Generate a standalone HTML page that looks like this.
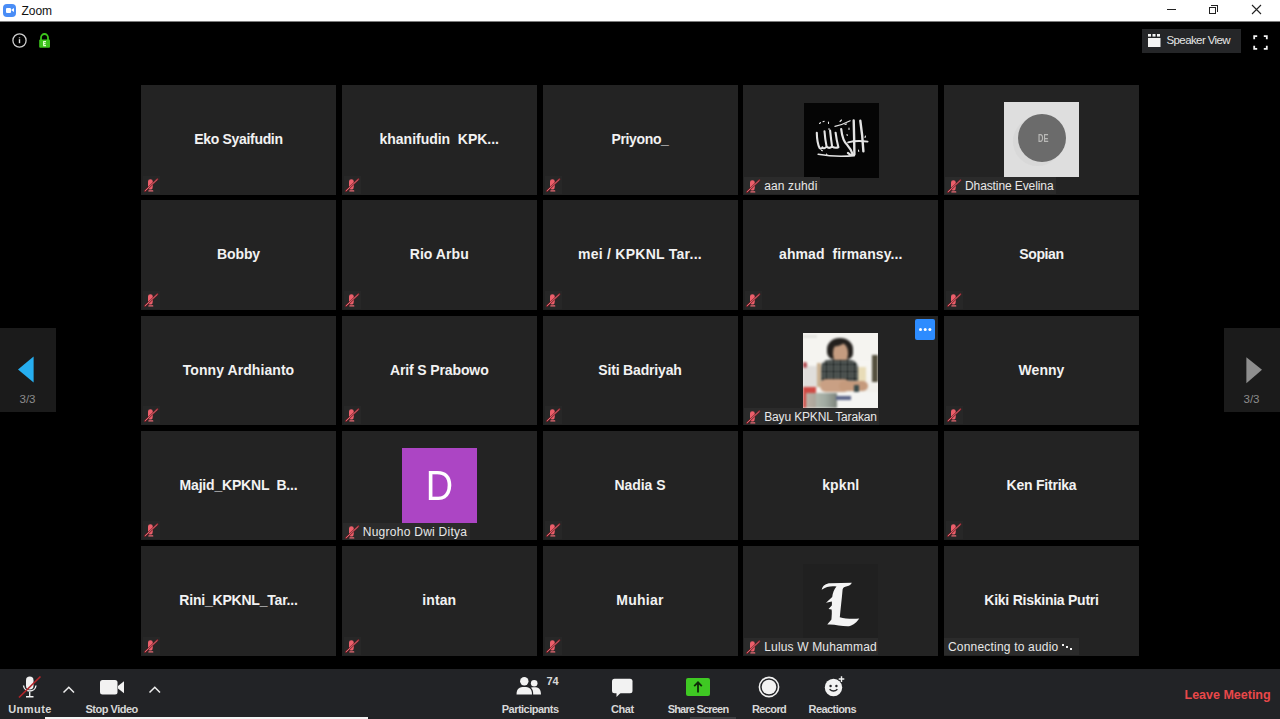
<!DOCTYPE html>
<html><head><meta charset="utf-8">
<style>
*{margin:0;padding:0;box-sizing:border-box}
html,body{width:1280px;height:719px;overflow:hidden;background:#000;font-family:"Liberation Sans",sans-serif}
.abs{position:absolute}
#title{position:absolute;left:0;top:0;width:1280px;height:21px;background:#fff}
.tile{position:absolute;width:195px;height:109.5px;background:#232323}
.nm{position:absolute;left:0;right:0;top:45px;text-align:center;color:#f2f2f2;font-weight:bold;font-size:14px;line-height:18px;white-space:pre}
.mic{position:absolute;left:2px;top:90.5px;width:17px;height:18px;background:#272727}
.lbl{position:absolute;left:1px;top:92px;height:17px;background:#2b2b2b;color:#e8e8e8;font-size:12px;line-height:18px;padding-left:20px;padding-right:3px;white-space:pre}
.lbl svg{position:absolute;left:1px;top:0}
.tb{position:absolute;color:#d8d8d8;font-weight:bold;font-size:11px;line-height:14px;white-space:pre}
</style></head><body>
<svg width="0" height="0" style="position:absolute">
<defs>
<g id="mm">
<path d="M5 5.6 A2.4 2.4 0 0 1 9.8 5.6 V10.6 Q9.8 13.2 8.1 13.6 H6.7 Q5 13.2 5 10.6Z" fill="#ec5f6b"/>
<rect x="5.3" y="14.3" width="5" height="1.3" rx="0.4" fill="#e96a74"/>
<path d="M2 14.9 L14.4 3.3" stroke="#7c1a22" stroke-width="2" stroke-linecap="round"/>
<path d="M2.2 14.7 L14.2 3.5" stroke="#e27c86" stroke-width="0.9" stroke-linecap="round"/>
</g>
</defs>
</svg>

<div class="abs" style="left:0;top:21px;width:1280px;height:1px;background:#7d7d7d"></div>
<div id="title">
 <div class="abs" style="left:3px;top:4px;width:13px;height:13px;border-radius:4px;background:#4a8df6"></div>
 <div class="abs" style="left:5.5px;top:8px;width:5.5px;height:4.5px;background:#fff;border-radius:1px"></div>
 <div class="abs" style="left:11px;top:8px;width:0;height:0;border-top:2.25px solid transparent;border-bottom:2.25px solid transparent;border-right:3px solid #fff"></div>
 <div class="abs" style="left:21.4px;top:4.2px;font-size:12px;line-height:14px;color:#111">Zoom</div>
 <div class="abs" style="left:1167px;top:9px;width:9px;height:1px;background:#222"></div>
 <div class="abs" style="left:1209px;top:7px;width:7px;height:7px;border:1px solid #222;background:#fff"></div>
 <div class="abs" style="left:1211px;top:5px;width:7px;height:7px;border-top:1px solid #222;border-right:1px solid #222"></div>
 <svg class="abs" style="left:1251px;top:4px" width="11" height="11"><path d="M1 1L10 10M10 1L1 10" stroke="#222" stroke-width="1.1"/></svg>
</div>

<!-- top left icons -->
<svg class="abs" style="left:11px;top:32px" width="17" height="17"><circle cx="8.5" cy="8.5" r="6.6" fill="none" stroke="#cfcfcf" stroke-width="1.3"/><rect x="7.8" y="5.3" width="1.4" height="1" fill="#bbb"/><rect x="7.8" y="7.2" width="1.4" height="4" fill="#ddd"/></svg>
<svg class="abs" style="left:38px;top:33px" width="13" height="15"><path d="M3 7 V4.5 A3.5 3.5 0 0 1 10 4.5 V7" fill="none" stroke="#3cc41c" stroke-width="1.8"/><rect x="1.2" y="6.5" width="10.8" height="8.2" rx="1" fill="#3cc41c"/><path d="M5.2 8.6h2.8M5.2 10.6h2.4M5.2 12.6h2.8M5.6 8.6v4" stroke="#e0ffd0" stroke-width="1.1"/></svg>

<!-- speaker view -->
<div class="abs" style="left:1142px;top:29px;width:99px;height:24px;background:#252628"></div>
<svg class="abs" style="left:1147px;top:33px" width="15" height="15"><rect x="1" y="1" width="3" height="2.6" fill="#f4f4f4"/><rect x="5.5" y="1" width="3" height="2.6" fill="#f4f4f4"/><rect x="10" y="1" width="3" height="2.6" fill="#f4f4f4"/><rect x="1" y="5" width="12.5" height="9" fill="#f4f4f4"/></svg>
<div class="abs" style="left:1166.5px;top:32.5px;font-size:11.5px;line-height:14px;color:#e6e6e6;letter-spacing:-0.6px">Speaker View</div>
<svg class="abs" style="left:1252px;top:34px" width="17" height="17"><path d="M2.2 5.2V2.2H5.2M11.8 2.2H14.8V5.2M14.8 11.8V14.8H11.8M5.2 14.8H2.2V11.8" fill="none" stroke="#f2f2f2" stroke-width="1.8"/></svg>

<!-- side nav -->
<div class="abs" style="left:0;top:328px;width:56px;height:84px;background:#1b1b1b"></div>
<svg class="abs" style="left:16px;top:355px" width="20" height="30"><path d="M2 14.5 L17.6 1.5 V27.5Z" fill="#26aef0"/></svg>
<div class="abs" style="left:19.5px;top:393px;font-size:11.5px;line-height:13px;color:#8d8d8d">3/3</div>
<div class="abs" style="left:1224px;top:328px;width:56px;height:84px;background:#1b1b1b"></div>
<svg class="abs" style="left:1244px;top:355px" width="20" height="30"><path d="M2.4 2.3 L18 14.8 L2.4 28.3Z" fill="#8e8e8e"/></svg>
<div class="abs" style="left:1243.5px;top:393px;font-size:11.5px;line-height:13px;color:#8d8d8d">3/3</div>

<div class="tile" style="left:141px;top:85px"><div class="nm" style="letter-spacing:-0.325px">Eko Syaifudin</div><div class="mic"><svg width="17" height="17"><use href="#mm"/></svg></div></div>
<div class="tile" style="left:341.75px;top:85px"><div class="nm" style="letter-spacing:-0.024px">khanifudin  KPK...</div><div class="mic"><svg width="17" height="17"><use href="#mm"/></svg></div></div>
<div class="tile" style="left:542.5px;top:85px"><div class="nm" style="letter-spacing:-0.357px">Priyono_</div><div class="mic"><svg width="17" height="17"><use href="#mm"/></svg></div></div>
<div class="tile" style="left:743.25px;top:85px"><div class="abs" style="left:60.25px;top:17.5px;width:75px;height:75px;background:#050505"></div>
<svg class="abs" style="left:60.25px;top:17.5px" width="75" height="75"><g fill="none" stroke="#e4e4e4" stroke-linecap="round" stroke-linejoin="round">
<path d="M49.7 17.5 Q50.2 35 50.4 51.2 Q47 53 44 50" stroke-width="2.4"/>
<path d="M56.3 17.8 Q58.5 32 59.4 48.4" stroke-width="2.4"/>
<path d="M44.1 39.4 Q53 37 63.6 38.7" stroke-width="1.8"/>
<path d="M37.2 26.2 Q38.5 38 43.4 42.2 Q47 46 49 51.9" stroke-width="2.2"/>
<path d="M12.8 29.7 Q13 40 15.6 45 Q17.5 46.5 18.4 44.3 Q20 46.5 22.6 43.6 Q21 36 20.5 28.3 M22.6 43.6 Q25 46 28.1 43.6 Q27 36 26.1 27.6 M28.1 43.6 Q31 45.5 34.4 44.3 Q32.5 37 31.6 29.7" stroke-width="2.1"/>
<path d="M14.2 51.2 Q32 54.5 50.4 52.6" stroke-width="1.6"/>
<path d="M30.9 23.4 Q38 22 46.2 17.8" stroke-width="1.1"/>
<path d="M15.5 20.5l1 -0.8M19 18.8l1.2 -0.5M24.5 19l0 1.5M25 25.5l0 1M36 18.5q1 -1 1.5 -1.5M41 21.5l1.5 -0.5M45 25l0 1.5M43 31.5l0.3 1M61.5 33l-0.5 1.5M54.5 47l0.2 1.5M17.5 47.5l1 0.3M22.5 51l0.5 1" stroke-width="1.1"/>
</g></svg><div class="lbl" style="letter-spacing:0.125px;"><svg width="17" height="17"><use href="#mm"/></svg>aan zuhdi</div></div>
<div class="tile" style="left:944px;top:85px"><div class="abs" style="left:60px;top:17.25px;width:75px;height:75px;background:#dedede"></div>
<div class="abs" style="left:69px;top:32px;width:49px;height:49px;border-radius:50%;background:#d3d3d3;opacity:.6"></div>
<div class="abs" style="left:73.5px;top:28.5px;width:48.5px;height:48.5px;border-radius:50%;background:#6b6b6b"></div>
<div class="abs" style="left:74.5px;top:46.7px;width:48.5px;text-align:center;font-size:11px;line-height:12px;font-weight:bold;color:#b8b8b6;transform:scaleX(0.68)">DE</div><div class="lbl" style="letter-spacing:-0.100px;"><svg width="17" height="17"><use href="#mm"/></svg>Dhastine Evelina</div></div>
<div class="tile" style="left:141px;top:200.25px"><div class="nm" style="letter-spacing:-0.100px">Bobby</div><div class="mic"><svg width="17" height="17"><use href="#mm"/></svg></div></div>
<div class="tile" style="left:341.75px;top:200.25px"><div class="nm" style="letter-spacing:0.057px">Rio Arbu</div><div class="mic"><svg width="17" height="17"><use href="#mm"/></svg></div></div>
<div class="tile" style="left:542.5px;top:200.25px"><div class="nm" style="letter-spacing:0.259px">mei / KPKNL Tar...</div><div class="mic"><svg width="17" height="17"><use href="#mm"/></svg></div></div>
<div class="tile" style="left:743.25px;top:200.25px"><div class="nm" style="letter-spacing:0.082px">ahmad  firmansy...</div><div class="mic"><svg width="17" height="17"><use href="#mm"/></svg></div></div>
<div class="tile" style="left:944px;top:200.25px"><div class="nm" style="letter-spacing:-0.380px">Sopian</div><div class="mic"><svg width="17" height="17"><use href="#mm"/></svg></div></div>
<div class="tile" style="left:141px;top:315.5px"><div class="nm" style="letter-spacing:0.071px">Tonny Ardhianto</div><div class="mic"><svg width="17" height="17"><use href="#mm"/></svg></div></div>
<div class="tile" style="left:341.75px;top:315.5px"><div class="nm" style="letter-spacing:-0.123px">Arif S Prabowo</div><div class="mic"><svg width="17" height="17"><use href="#mm"/></svg></div></div>
<div class="tile" style="left:542.5px;top:315.5px"><div class="nm" style="letter-spacing:-0.167px">Siti Badriyah</div><div class="mic"><svg width="17" height="17"><use href="#mm"/></svg></div></div>
<div class="tile" style="left:743.25px;top:315.5px"><div class="abs" style="left:60px;top:17px;width:75px;height:75px;background:#f2f1ed;overflow:hidden"><div class="abs" style="left:-3px;top:-3px;width:81px;height:81px;filter:blur(0.8px)"><div class="abs" style="left:3px;top:3px;width:75px;height:75px;background:linear-gradient(180deg,#f5f4f0 0%,#f6f5f1 50%,#eeece6 100%)">
<div class="abs" style="left:0;top:2px;width:14px;height:3px;background:#e4e4e0"></div>
<div class="abs" style="left:0;top:33px;width:14px;height:22px;background:#e0dedb"></div>
<div class="abs" style="left:0;top:29px;width:4px;height:6px;border-radius:2px;background:#b04a50"></div>
<div class="abs" style="left:0;top:54px;width:13px;height:21px;background:#cf4a44"></div>
<div class="abs" style="left:69px;top:22.5px;width:6px;height:27px;background:#55503e"></div>
<div class="abs" style="left:55px;top:34.5px;width:8px;height:14px;background:#e8dcb8"></div>
<div class="abs" style="left:14px;top:30.5px;width:3.5px;height:24px;background:#c9b090"></div>
<div class="abs" style="left:24px;top:5.5px;width:25.5px;height:22px;border-radius:50% 50% 30% 35%;background:#23201d"></div>
<div class="abs" style="left:29.5px;top:10px;width:15.5px;height:22px;border-radius:45% 45% 50% 50%;background:#c49c80"></div>
<div class="abs" style="left:27px;top:8px;width:14px;height:5px;border-radius:50%;background:#23201d;transform:rotate(-12deg)"></div>
<div class="abs" style="left:17.5px;top:27px;width:37.5px;height:24px;border-radius:8px 8px 2px 2px;background-color:#171d1c;background-image:repeating-linear-gradient(90deg,rgba(210,215,210,.5) 0 1px,transparent 1px 3.5px),repeating-linear-gradient(0deg,rgba(210,215,210,.4) 0 1px,transparent 1px 3.5px)"></div>
<div class="abs" style="left:17px;top:46px;width:30px;height:13px;border-radius:6px;background:#c9a084"></div>
<div class="abs" style="left:36px;top:48px;width:28.5px;height:10px;border-radius:5px;background:#c59a7c"></div>
<div class="abs" style="left:51px;top:52px;width:5px;height:7px;background:#3a4a4a"></div>
<div class="abs" style="left:13px;top:59.5px;width:62px;height:16px;background:#f4f4f2"></div>
<div class="abs" style="left:2.5px;top:60px;width:31px;height:15px;background:linear-gradient(90deg,#b8bcb0,#9aa49a 60%,#707870);opacity:.9"></div>
<div class="abs" style="left:33px;top:63px;width:15px;height:4.5px;background:#5a6488"></div>
</div></div></div>
<div class="abs" style="left:171.5px;top:3px;width:20.5px;height:21px;border-radius:2px;background:#2d8cff"></div>
<div class="abs" style="left:176px;top:12px;width:3px;height:3px;border-radius:50%;background:#fff;box-shadow:4.7px 0 0 #fff,9.4px 0 0 #fff"></div><div class="lbl" style="letter-spacing:-0.159px;width:134.5px;"><svg width="17" height="17"><use href="#mm"/></svg>Bayu KPKNL Tarakan</div></div>
<div class="tile" style="left:944px;top:315.5px"><div class="nm" style="letter-spacing:0.050px">Wenny</div><div class="mic"><svg width="17" height="17"><use href="#mm"/></svg></div></div>
<div class="tile" style="left:141px;top:430.75px"><div class="nm" style="letter-spacing:-0.194px">Majid_KPKNL  B...</div><div class="mic"><svg width="17" height="17"><use href="#mm"/></svg></div></div>
<div class="tile" style="left:341.75px;top:430.75px"><div class="abs" style="left:60px;top:17.5px;width:75px;height:75px;background:#ac45c4"></div>
<div class="abs" style="left:60px;top:17.5px;width:75px;height:75px;text-align:center;font-size:42px;line-height:76px;color:#fff;transform:scaleX(0.9)">D</div><div class="lbl" style="letter-spacing:0.263px;"><svg width="17" height="17"><use href="#mm"/></svg>Nugroho Dwi Ditya</div></div>
<div class="tile" style="left:542.5px;top:430.75px"><div class="nm" style="letter-spacing:-0.067px">Nadia S</div><div class="mic"><svg width="17" height="17"><use href="#mm"/></svg></div></div>
<div class="tile" style="left:743.25px;top:430.75px"><div class="nm" style="letter-spacing:0.100px">kpknl</div></div>
<div class="tile" style="left:944px;top:430.75px"><div class="nm" style="letter-spacing:-0.230px">Ken Fitrika</div><div class="mic"><svg width="17" height="17"><use href="#mm"/></svg></div></div>
<div class="tile" style="left:141px;top:546px"><div class="nm" style="letter-spacing:-0.212px">Rini_KPKNL_Tar...</div><div class="mic"><svg width="17" height="17"><use href="#mm"/></svg></div></div>
<div class="tile" style="left:341.75px;top:546px"><div class="nm" style="letter-spacing:0.100px">intan</div><div class="mic"><svg width="17" height="17"><use href="#mm"/></svg></div></div>
<div class="tile" style="left:542.5px;top:546px"><div class="nm" style="letter-spacing:0.240px">Muhiar</div><div class="mic"><svg width="17" height="17"><use href="#mm"/></svg></div></div>
<div class="tile" style="left:743.25px;top:546px"><div class="abs" style="left:60px;top:17.5px;width:75px;height:75px;background:#202020"></div>
<svg class="abs" style="left:60px;top:17.5px" width="75" height="75"><path fill="#f4f4f4" d="M18.7 25.8 C19.5 21.5 23 19.3 27.5 19.3 L48.8 18.8 C48 20.5 46.5 21.8 44 22.3 C41.5 22.8 40 23.5 39.6 25.5 C38.8 35 37.6 45 36.8 53.3 C42 54.8 49 55 56.2 54.6 C54 58 50.5 61.5 46 62.2 C39 62.6 31 59.8 24.3 60.6 C25.5 58.6 27.2 57.2 28.4 55.5 C28.8 51 29 48 28.6 45.5 L25.5 45 L28.8 41.5 C29 40 29 39 28.8 37.5 L23 38.8 L29.2 33 C29.8 29 31 25.5 33.5 22.6 C29 21.8 23 22.5 18.7 25.8Z"/></svg><div class="lbl" style="letter-spacing:0.160px;width:134px;"><svg width="17" height="17"><use href="#mm"/></svg>Lulus W Muhammad</div></div>
<div class="tile" style="left:944px;top:546px"><div class="nm" style="letter-spacing:-0.244px">Kiki Riskinia Putri</div><div class="lbl" style="left:0;width:135px;padding-left:4px;letter-spacing:0.19px">Connecting to audio</div><div class="abs" style="left:118px;top:98px;width:2px;height:2px;background:#f0f0f0;box-shadow:4px 2px 0 #f0f0f0,8px 4px 0 #f0f0f0"></div></div>

<!-- toolbar -->
<div class="abs" style="left:0;top:669px;width:1280px;height:50px;background:#222326"></div>
<div class="abs" style="left:45px;top:717px;width:323px;height:2px;background:#f4f4f4"></div>
<div class="abs" style="left:690px;top:717px;width:46px;height:2px;background:#3c3d40"></div>

<svg class="abs" style="left:17px;top:675px" width="26" height="24">
 <rect x="9" y="1.5" width="7.5" height="13" rx="3.75" fill="#f2f2f2"/>
 <path d="M6.5 10.5 A6.3 6.3 0 0 0 19 10.5" fill="none" stroke="#f2f2f2" stroke-width="1.4"/>
 <path d="M12.7 17v4.5M9 21.8h7.5" stroke="#f2f2f2" stroke-width="1.4"/>
 <path d="M2 22.5 L23.5 1.5" stroke="#b3262a" stroke-width="1.7"/>
</svg>
<svg class="abs" style="left:62px;top:685px" width="14" height="10"><path d="M1.5 7.5 L6.8 2.2 L12 7.5" fill="none" stroke="#eee" stroke-width="1.5"/></svg>
<svg class="abs" style="left:99px;top:679px" width="28" height="17"><rect x="1" y="1" width="17.5" height="14.5" rx="2.5" fill="#f2f2f2"/><path d="M19 7 L25 2.2 V14.3 L19 9.6Z" fill="#f2f2f2"/></svg>
<svg class="abs" style="left:148px;top:685px" width="14" height="10"><path d="M1.5 7.5 L6.8 2.2 L12 7.5" fill="none" stroke="#eee" stroke-width="1.5"/></svg>
<div class="tb" style="left:-19.95px;width:100px;text-align:center;top:701.9px;letter-spacing:0.46px">Unmute</div>
<div class="tb" style="left:61.65px;width:100px;text-align:center;top:701.9px;letter-spacing:-0.48px">Stop Video</div>

<svg class="abs" style="left:515px;top:676px" width="28" height="20">
 <circle cx="9.3" cy="5.2" r="4.2" fill="#f2f2f2"/><path d="M1.5 18.5 C1.5 12.5 4.5 11 9.3 11 C14 11 17 12.5 17 18.5Z" fill="#f2f2f2"/>
 <circle cx="19.2" cy="7.2" r="3.3" fill="#f2f2f2"/><path d="M15.8 11.8 C17 11.3 18 11.2 19.5 11.2 C23.5 11.2 26 13 26 18.5 H18.2 C18.2 15 17.5 13 15.8 11.8Z" fill="#f2f2f2"/>
</svg>
<div class="tb" style="left:546.4px;top:673.5px;font-size:11px">74</div>
<div class="tb" style="left:480.15px;width:100px;text-align:center;top:701.9px;letter-spacing:-0.51px">Participants</div>

<svg class="abs" style="left:611px;top:678px" width="23" height="20"><rect x="1" y="0.8" width="20.5" height="14.5" rx="2.5" fill="#f2f2f2"/><path d="M5.5 14 L5.5 19 L10.5 14Z" fill="#f2f2f2"/></svg>
<div class="tb" style="left:572.35px;width:100px;text-align:center;top:701.9px;letter-spacing:-0.43px">Chat</div>

<div class="abs" style="left:686px;top:678px;width:24px;height:18px;border-radius:2px;background:#3fc923"></div>
<svg class="abs" style="left:686px;top:678px" width="24" height="18"><path d="M12 14.5V4.5M8.2 8.2L12 4.3L15.8 8.2" fill="none" stroke="#0e2a08" stroke-width="1.8"/></svg>
<div class="tb" style="left:648px;width:100px;text-align:center;top:701.9px;letter-spacing:-0.8px">Share Screen</div>

<svg class="abs" style="left:757px;top:675px" width="24" height="24"><circle cx="12" cy="12" r="9.6" fill="none" stroke="#f2f2f2" stroke-width="1.6"/><circle cx="12" cy="12" r="7.3" fill="#f2f2f2"/></svg>
<div class="tb" style="left:719.1px;width:100px;text-align:center;top:701.9px;letter-spacing:-0.64px">Record</div>

<svg class="abs" style="left:822px;top:674px" width="25" height="24">
 <circle cx="11.5" cy="13.5" r="8.7" fill="#f2f2f2"/>
 <circle cx="8.6" cy="12" r="1.2" fill="#222326"/><circle cx="14.4" cy="12" r="1.2" fill="#222326"/>
 <path d="M7.6 15.2 Q11.5 19 15.4 15.2" fill="none" stroke="#222326" stroke-width="1.4"/>
 <path d="M19.5 1.8v6.4M16.3 5h6.4" stroke="#222326" stroke-width="3.2"/>
 <path d="M19.5 2.3v5.6M16.7 5h5.6" stroke="#f2f2f2" stroke-width="1.4"/>
</svg>
<div class="tb" style="left:782.3px;width:100px;text-align:center;top:701.9px;letter-spacing:-0.55px">Reactions</div>

<div class="abs" style="left:1184.5px;top:688.2px;font-size:12.5px;line-height:15px;font-weight:bold;color:#e9484a">Leave Meeting</div>
</body></html>
